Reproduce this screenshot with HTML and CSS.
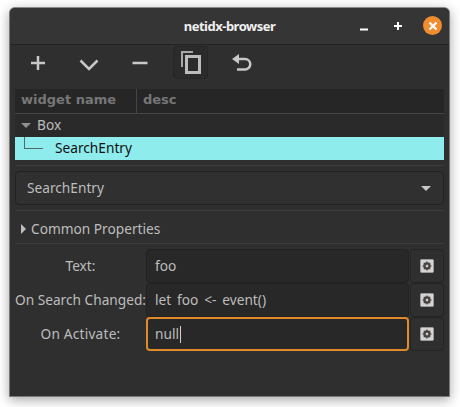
FILE: index.html
```html
<!DOCTYPE html>
<html lang="en">
<head>
    <meta charset="UTF-8">
    <title>netidx-browser</title>
    <link rel="stylesheet" href="styles.css">
</head>
<body>
    <div class="window">
        <header class="titlebar">
            <span class="title">netidx-browser</span>
            <div class="window-buttons">
                <svg class="win-icon" width="10" height="10" viewBox="0 0 10 10"><path d="M1 8.500h8" stroke="#fff" stroke-width="2"/></svg>
                <svg class="win-icon" width="10" height="10" viewBox="0 0 10 10"><path d="M1 5h8M5 1v8" stroke="#fff" stroke-width="2"/></svg>
                <div class="close">
                    <svg width="10" height="10" viewBox="0 0 10 10"><path d="M1.500 1.500l7 7M8.500 1.500l-7 7" stroke="#fff" stroke-width="2.200"/></svg>
                </div>
            </div>
        </header>
        <div class="toolbar">
            <div class="tool">
                <svg width="16" height="16" viewBox="0 0 16 16"><path d="M1 8h14M8 1v14" stroke="#c8c8c8" stroke-width="2.500"/></svg>
            </div>
            <div class="tool">
                <svg class="chevron" width="20" height="12" viewBox="0 0 20 12"><path d="M1.500 1.500L10 10l8.500-8.500" fill="none" stroke="#c8c8c8" stroke-width="2.500"/></svg>
            </div>
            <div class="tool">
                <svg width="16" height="16" viewBox="0 0 16 16"><path d="M0.500 8h15" stroke="#c8c8c8" stroke-width="2.500"/></svg>
            </div>
            <div class="tool tool-active">
                <svg width="20" height="24" viewBox="0 0 20 24">
                    <path d="M12 1H1v15" fill="none" stroke="#a8a8a8" stroke-width="2"/>
                    <rect x="5.500" y="5.500" width="13" height="16" fill="none" stroke="#bdbdbd" stroke-width="3"/>
                </svg>
            </div>
            <div class="tool">
                <svg width="20" height="20" viewBox="0 0 20 20"><path d="M3 6h10a4.500 4.500 0 0 1 0 10.500H5" fill="none" stroke="#c8c8c8" stroke-width="2.500"/><path d="M0 6l7-5v10z" fill="#c8c8c8"/></svg>
            </div>
        </div>
        <main class="content">
            <div class="tree">
                <div class="tree-head">
                    <div class="col col-name">widget name</div>
                    <div class="col">desc</div>
                </div>
                <div class="tree-row">
                    <span class="arrow-down"></span>
                    <span class="label-text">Box</span>
                </div>
                <div class="tree-row tree-row-selected">
                    <span class="branch"></span>
                    <span class="label-text">SearchEntry</span>
                </div>
            </div>
            <div class="sep"></div>
            <div class="combo">
                <span class="label-text">SearchEntry</span>
                <span class="arrow-down combo-arrow"></span>
            </div>
            <div class="sep"></div>
            <div class="expander">
                <span class="arrow-right"></span>
                <span class="label-text">Common Properties</span>
            </div>
            <div class="sep"></div>
            <div class="props">
                <label class="prop-label"><span class="label-text">Text:</span></label>
                <div class="entry"><span class="label-text">foo</span></div>
                <div class="gear-btn"><svg class="gear" width="14" height="14" viewBox="0 0 14 14"><rect x="0.500" y="0.500" width="13" height="13" rx="1" fill="#d4d4d4" stroke="#9a9a9a"/><circle cx="7" cy="7" r="2.700" fill="none" stroke="#4a4440" stroke-width="2"/><path d="M7 2.500v9M2.500 7h9M3.800 3.800l6.400 6.400M10.200 3.800l-6.400 6.400" stroke="#4a4440" stroke-width="1.200"/><circle cx="7" cy="7" r="1.200" fill="#d4d4d4"/></svg></div>
                <label class="prop-label"><span class="label-text">On Search Changed:</span></label>
                <div class="entry"><span class="label-text">let foo &lt;- event()</span></div>
                <div class="gear-btn"><svg class="gear" width="14" height="14" viewBox="0 0 14 14"><rect x="0.500" y="0.500" width="13" height="13" rx="1" fill="#d4d4d4" stroke="#9a9a9a"/><circle cx="7" cy="7" r="2.700" fill="none" stroke="#4a4440" stroke-width="2"/><path d="M7 2.500v9M2.500 7h9M3.800 3.800l6.400 6.400M10.200 3.800l-6.400 6.400" stroke="#4a4440" stroke-width="1.200"/><circle cx="7" cy="7" r="1.200" fill="#d4d4d4"/></svg></div>
                <label class="prop-label prop-label-wide"><span class="label-text">On Activate:</span></label>
                <div class="entry entry-focus"><span class="label-text">null</span><span class="caret"></span></div>
                <div class="gear-btn"><svg class="gear" width="14" height="14" viewBox="0 0 14 14"><rect x="0.500" y="0.500" width="13" height="13" rx="1" fill="#d4d4d4" stroke="#9a9a9a"/><circle cx="7" cy="7" r="2.700" fill="none" stroke="#4a4440" stroke-width="2"/><path d="M7 2.500v9M2.500 7h9M3.800 3.800l6.400 6.400M10.200 3.800l-6.400 6.400" stroke="#4a4440" stroke-width="1.200"/><circle cx="7" cy="7" r="1.200" fill="#d4d4d4"/></svg></div>
            </div>
        </main>
    </div>
</body>
</html>
```
FILE: styles.css
```css
/* netidx-browser window */
html, body {
    height: 100%;
    overflow: hidden;
}

body {
    margin: 0;
    padding: 7px 10px 0 9px;
    box-sizing: border-box;
    background-color: #fff;
    font-family: "Noto Sans", sans-serif;
    font-size: 13.7px;
    color: #bdbdbd;
}

.window {
    height: 390px;
    box-sizing: border-box;
    background-color: #2f2f2f;
    border: 1px solid #7a7a7a;
    border-top-color: #8a8a8a;
    border-radius: 6px 6px 0 0;
    box-shadow: 0 3px 12px rgba(0, 0, 0, 0.35);
}

.titlebar {
    height: 36px;
    display: flex;
    align-items: center;
    justify-content: center;
    position: relative;
    background-color: #353535;
    border-bottom: 1px solid #222;
    border-radius: 5px 5px 0 0;
}

.title {
    font-weight: bold;
    font-size: 13px;
    letter-spacing: -0.5px;
    color: #f0f0f0;
}

.window-buttons {
    position: absolute;
    right: 7px;
    top: 8px;
    display: flex;
    align-items: center;
}

.win-icon {
    margin-right: 24px;
}

.close {
    width: 19px;
    height: 19px;
    margin-left: -4px;
    border-radius: 50%;
    background-color: #f08d2e;
    display: flex;
    align-items: center;
    justify-content: center;
}

.toolbar {
    height: 44px;
    box-sizing: border-box;
    display: flex;
    align-items: flex-start;
    padding: 1px 0 0 10px;
}

.tool {
    width: 35px;
    height: 33px;
    margin-right: 16px;
    display: flex;
    align-items: center;
    justify-content: center;
}

.chevron {
    margin-top: 5px;
}

.tool-active {
    background-color: #2b2b2b;
    border: 1px solid #262626;
    border-radius: 4px;
    box-sizing: border-box;
}

.content {
    padding: 0 5px;
}

/* Noto sits a pixel low in its line box here */
.label-text {
    position: relative;
    top: -1px;
}

.tree-head {
    height: 25px;
    display: flex;
    align-items: center;
    background-color: #262626;
    border-bottom: 1px solid #464646;
    font-weight: bold;
    font-family: "DejaVu Sans", sans-serif;
    font-size: 13px;
    color: #767676;
    box-sizing: border-box;
}

.col {
    padding-left: 6px;
    height: 100%;
    line-height: 22px;
}

.col-name {
    width: 122px;
    box-sizing: border-box;
    border-right: 1px solid #464646;
}

.tree-row {
    height: 23px;
    display: flex;
    align-items: center;
    background-color: #2a2a2a;
    padding-left: 6px;
}

.tree-row-selected {
    background-color: #8fecec;
    color: #111;
    padding-left: 9px;
    align-items: flex-start;
}

.tree-row-selected .label-text {
    top: 1px;
}

.arrow-down {
    width: 0;
    height: 0;
    border-left: 5px solid transparent;
    border-right: 5px solid transparent;
    border-top: 5px solid #8f8f8f;
    margin-right: 6px;
}

.branch {
    flex: none;
    width: 18px;
    height: 11px;
    border-left: 1px solid #4e6a6a;
    border-bottom: 1px solid #4e6a6a;
    margin-right: 12px;
}

.sep {
    height: 1px;
    background-color: #3c3c3c;
    margin: 5px 0;
}

.combo {
    height: 34px;
    display: flex;
    align-items: center;
    justify-content: space-between;
    box-sizing: border-box;
    border: 1px solid #222;
    border-radius: 4px;
    background-color: #303030;
    padding: 0 12px 0 11px;
}

.combo-arrow {
    border-top-color: #c8c8c8;
    margin-right: 0;
}

.expander {
    height: 26px;
    display: flex;
    align-items: center;
    padding: 0 0 0 6px;
}

.expander + .sep {
    margin-top: 1px;
}

.arrow-right {
    width: 0;
    height: 0;
    border-top: 5px solid transparent;
    border-bottom: 5px solid transparent;
    border-left: 5px solid #bdbdbd;
    margin-right: 5px;
}

.props {
    display: grid;
    grid-template-columns: 131px 264px 34px;
    grid-auto-rows: 34px;
}

.prop-label {
    display: flex;
    align-items: center;
    justify-content: center;
    white-space: nowrap;
}

.prop-label-wide {
    letter-spacing: 0.2px;
}

.entry {
    display: flex;
    align-items: center;
    box-sizing: border-box;
    background-color: #282828;
    border: 1px solid #222;
    border-radius: 4px;
    padding-left: 8px;
    margin-right: 1px;
    word-spacing: 2.3px;
}

.entry-focus {
    border: 2px solid #e08a2a;
    padding-left: 7px;
}

.caret {
    width: 1px;
    height: 17px;
    background-color: #d0d0d0;
    margin-left: 1px;
}

.gear-btn {
    display: flex;
    align-items: center;
    justify-content: center;
    box-sizing: border-box;
    background-color: #2f2f2f;
    border: 1px solid #242424;
    border-radius: 4px;
}
```
